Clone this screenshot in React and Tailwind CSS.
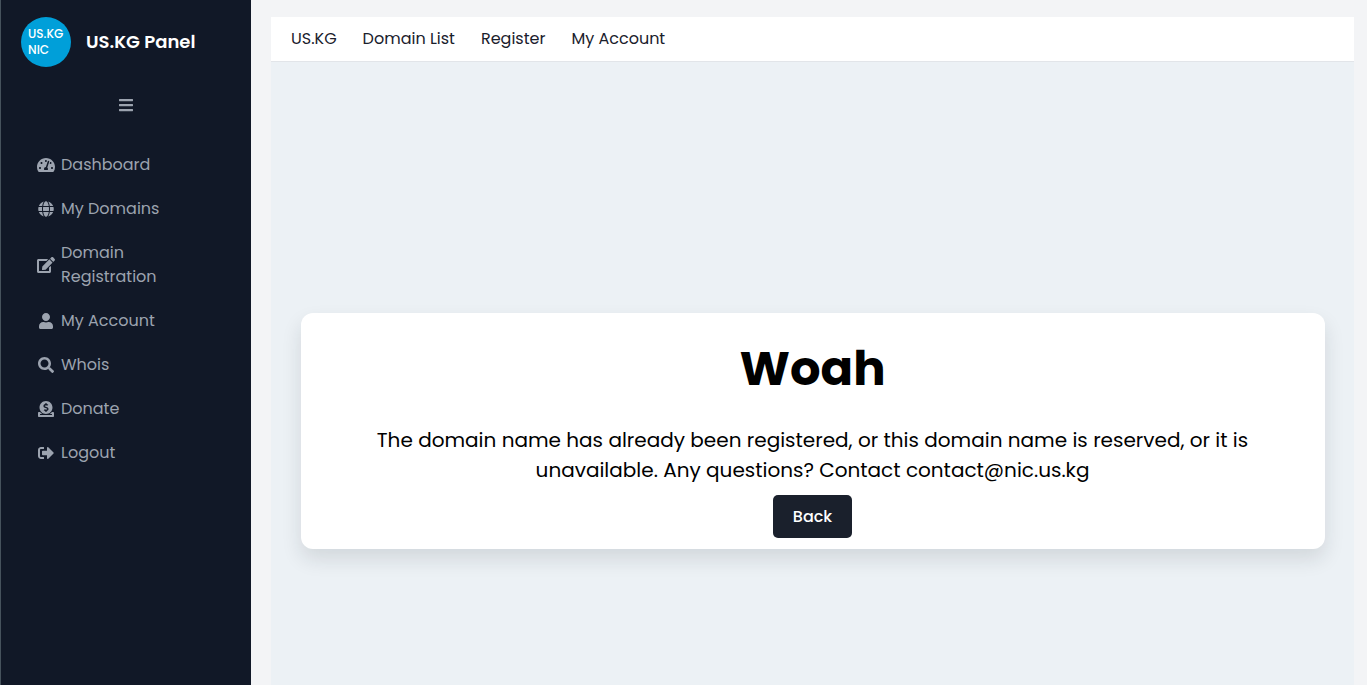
import React from "react";
import {
  FaBars,
  FaDonate,
  FaEdit,
  FaGlobe,
  FaSearch,
  FaSignOutAlt,
  FaTachometerAlt,
  FaUser,
} from "react-icons/fa";

const sideLinks = [
  { label: "Dashboard", icon: FaTachometerAlt },
  { label: "My Domains", icon: FaGlobe },
  { label: "Domain Registration", icon: FaEdit },
  { label: "My Account", icon: FaUser },
  { label: "Whois", icon: FaSearch },
  { label: "Donate", icon: FaDonate },
  { label: "Logout", icon: FaSignOutAlt },
];

const topLinks = ["US.KG", "Domain List", "Register", "My Account"];

function Sidebar() {
  return (
    <aside className="w-[251px] shrink-0 border-l border-[#46525c] bg-[#111827] text-[#9ca3af]">
      <div className="flex items-center gap-[15px] pl-5 pt-[17px]">
        <div className="flex size-[50px] shrink-0 items-center rounded-full bg-[#009fd9] pl-[7px] text-xs leading-4 font-medium text-white">
          <span>
            US.KG
            <br />
            NIC
          </span>
        </div>
        <h2 className="text-lg leading-7 font-semibold whitespace-nowrap text-white">US.KG Panel</h2>
      </div>

      <button type="button" aria-label="Toggle menu" className="mx-auto mt-[26px] flex size-6 items-center justify-center">
        <FaBars size={16} />
      </button>

      <nav className="mt-[26px] flex flex-col px-9">
        {sideLinks.map(({ label, icon: Icon }) => (
          <a key={label} href="#" className="flex items-center gap-[6px] py-[10px] text-base leading-6">
            <Icon size={16} className="w-[18px] shrink-0" />
            <span className="max-w-[120px]">{label}</span>
          </a>
        ))}
      </nav>
    </aside>
  );
}

function MessageCard() {
  return (
    <section className="flex w-full max-w-5xl flex-col items-center rounded-xl bg-white px-5 pt-5 pb-[11px] text-center text-black shadow-[0_10px_20px_rgba(26,32,44,0.12)]">
      <h1 className="text-5xl leading-[72px] font-bold">Woah</h1>
      <p className="mt-5 max-w-[900px] text-xl leading-[30px]">
        The domain name has already been registered, or this domain name is reserved, or it is
        unavailable. Any questions? Contact contact@nic.us.kg
      </p>
      <button type="button" className="mt-[10px] h-[43px] rounded-[5px] bg-[#1a202c] px-5 text-base font-medium text-white">
        Back
      </button>
    </section>
  );
}

export default function App() {
  return (
    <div className="flex h-screen overflow-hidden bg-[#f3f4f6] font-[Poppins,Inter,sans-serif]">
      <Sidebar />
      <main className="flex min-w-0 flex-1 flex-col pt-[17px] pr-[13px] pl-5">
        <nav className="flex h-[45px] shrink-0 items-center gap-[26px] border-b border-[#e2e5e9] bg-white px-5 text-base text-[#1a202c]">
          {topLinks.map((label) => (
            <a key={label} href="#">{label}</a>
          ))}
        </nav>
        <div className="flex flex-1 items-start justify-center bg-[#ecf1f5] px-[29px] pt-[251px]">
          <MessageCard />
        </div>
      </main>
    </div>
  );
}
